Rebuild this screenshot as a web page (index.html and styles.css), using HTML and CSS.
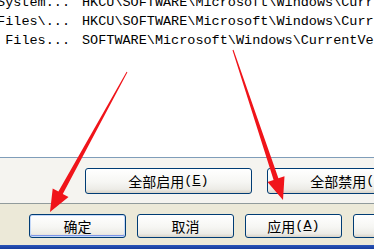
FILE: index.html
```html
<!DOCTYPE html>
<html lang="zh-CN">
<head>
<meta charset="utf-8">
<title>启动项</title>
<link rel="stylesheet" href="styles.css">
</head>
<body>
<div class="window">
  <div class="list">
    <div class="rows">
      <div class="row"><span class="c1"><span>C:\WINDOWS\system32\System...</span></span><span class="c2">HKCU\SOFTWARE\Microsoft\Windows\CurrentVersion\Run</span></div>
      <div class="row"><span class="c1"><span>C:\Program Files\...</span></span><span class="c2">HKCU\SOFTWARE\Microsoft\Windows\CurrentVersion\Run</span></div>
      <div class="row"><span class="c1"><span>Files...</span></span><span class="c2">SOFTWARE\Microsoft\Windows\CurrentVersion\Run</span></div>
    </div>
  </div>
  <div class="tabpage">
    <button class="btn wide">全部启用<span class="key">(<u>E</u>)</span></button>
    <button class="btn wide">全部禁用<span class="key">(<u>D</u>)</span></button>
  </div>
  <div class="footer">
    <button class="btn std default">确定</button>
    <button class="btn std">取消</button>
    <button class="btn std">应用<span class="key">(<u>A</u>)</span></button>
    <button class="btn std">帮助</button>
  </div>
  <div class="taskbar"></div>
  <svg class="arrows" width="374" height="249" viewBox="0 0 374 249">
    <polygon fill="#F0141A" points="126.6,71.8 127.4,72.2 62.8,193.9 68.5,197 50,212 52.7,188.4 58.4,191.5"/>
    <polygon fill="#F0141A" points="232.5,50.2 233.5,49.8 278.4,178.3 284.5,176.3 283,200 267.5,181.9 273.6,179.9"/>
  </svg>
</div>
</body>
</html>
```

FILE: styles.css
```css
html, body {
  margin: 0;
  padding: 0;
}

body {
  width: 374px;
  height: 249px;
  overflow: hidden;
  background: #ECE9D8;
}

.window {
  position: relative;
  width: 374px;
  height: 249px;
  overflow: hidden;
  display: flex;
  flex-direction: column;
  font-family: "Liberation Mono", "Noto Sans CJK SC", monospace;
}

.list {
  height: 157px;
  flex: none;
  background: #FFFFFF;
  border-bottom: 1px solid #7F9DB9;
  overflow: hidden;
}

.rows {
  margin-top: -7px;
}

.row {
  display: flex;
  height: 19px;
  line-height: 19px;
  font-size: 13.5px;
  white-space: nowrap;
  color: #000;
}

.c1 {
  flex: none;
  width: 82px;
  box-sizing: border-box;
  padding-right: 12px;
  display: flex;
  justify-content: flex-end;
  overflow: hidden;
}

.c1 > span {
  flex: none;
}

.c2 {
  flex: none;
}

.tabpage {
  flex: none;
  height: 35px;
  padding: 10px 0 0 85px;
  background: #F5F4F0;
  border-bottom: 1px solid #919B9C;
  display: flex;
  align-items: flex-start;
  gap: 15px;
}

.footer {
  flex: none;
  height: 31px;
  padding: 10px 0 0 29px;
  background: #ECE9D8;
  display: flex;
  align-items: flex-start;
  gap: 11px;
}

.taskbar {
  flex: 1;
  background: linear-gradient(#2B55B8, #163C9C);
}

.btn {
  flex: none;
  box-sizing: border-box;
  margin: 0;
  padding: 0;
  border: 1px solid #003C74;
  border-radius: 3px;
  background: linear-gradient(#FFFFFF 0%, #F6F6F3 55%, #ECEBE6 85%, #D8D3C8 100%);
  font-family: "Noto Sans CJK SC", sans-serif;
  font-size: 14px;
  line-height: 1;
  color: #000;
  display: flex;
  align-items: center;
  justify-content: center;
}

.wide {
  width: 167px;
  height: 26px;
}

.std {
  width: 97px;
  height: 24px;
}

.default {
  box-shadow: inset 0 0 0 1px #C4D8F8, inset 0 -1px 0 1px #7C95E8;
}

.key {
  font-family: "Liberation Mono", monospace;
  font-size: 13.5px;
}

.arrows {
  position: absolute;
  left: 0;
  top: 0;
  pointer-events: none;
}
```
